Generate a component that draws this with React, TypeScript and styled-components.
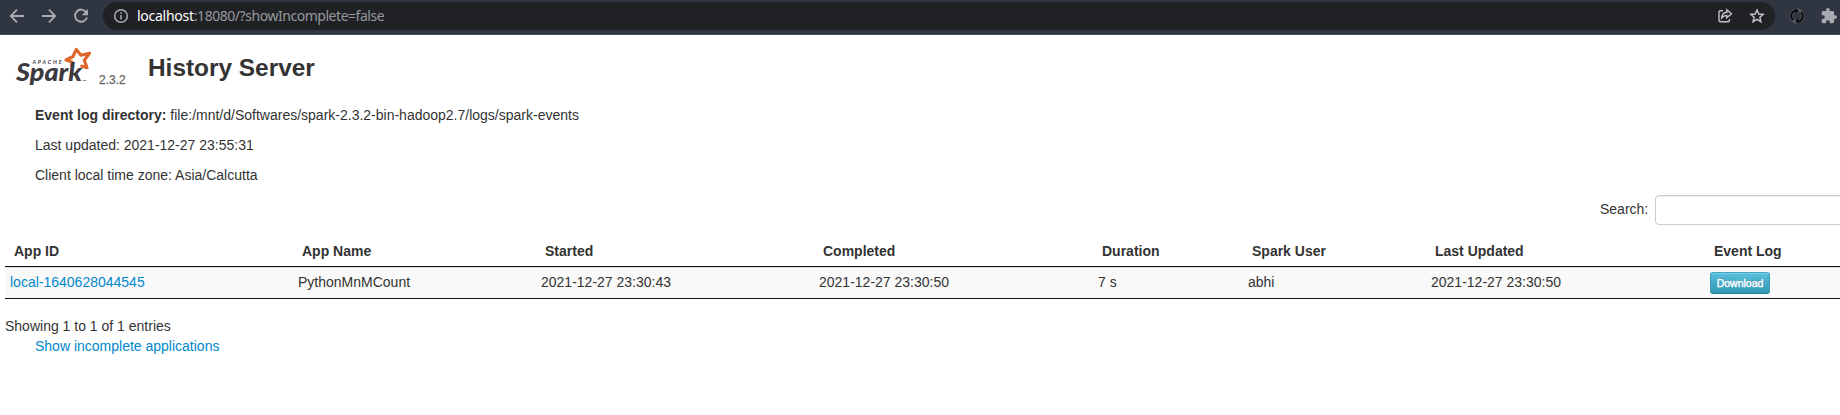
import React from 'react';
import styled, { createGlobalStyle } from 'styled-components';

const GlobalStyle = createGlobalStyle`
  * { box-sizing: border-box; }
  body {
    margin: 0;
    overflow: hidden;
    background: #fff;
    color: #333;
    font: 14px/20px "Liberation Sans", Arial, sans-serif;
  }
`;

const Toolbar = styled.header`
  display: flex;
  align-items: flex-start;
  height: 35px;
  padding-top: 2px;
  background: #303641;
  border-bottom: 1px solid #484c56;
`;

const NavButtons = styled.nav`
  display: flex;
  align-items: center;
  gap: 16px;
  width: 103px;
  height: 28px;
  padding-left: 9px;
`;

const Omnibox = styled.div`
  display: flex;
  align-items: center;
  width: 1672px;
  height: 28px;
  padding: 0 10px 0 10px;
  border-radius: 14px;
  background: #202124;
`;

const Url = styled.span`
  flex: 1;
  margin-left: 8px;
  color: #96999d;
  font: 14px/20px "Noto Sans", "Open Sans", sans-serif;
  letter-spacing: -0.46px;
`;

const Host = styled.span`
  color: #fff;
  letter-spacing: -0.26px;
`;

const Actions = styled.div`
  display: flex;
  align-items: center;
  gap: 16px;
`;

const Extensions = styled.div`
  display: flex;
  flex: none;
  align-items: center;
  gap: 16px;
  height: 28px;
  margin-left: 14px;
`;

const Glyph = styled.svg`
  display: block;
  flex: none;
  fill: none;
`;

const Heading = styled.div`
  display: flex;
  height: 70px;
  padding-left: 15px;
`;

const Logo = styled.svg`
  display: block;
  flex: none;
  width: 80px;
  height: 42px;
  margin-top: 11px;
`;

const Version = styled.span`
  width: 53px;
  padding: 35px 0 0 4px;
  color: #666;
  font-size: 12px;
  -webkit-text-stroke: 0.25px #666;
`;

const Title = styled.h3`
  margin: 13px 0 0;
  font-size: 24.4px;
  line-height: 40px;
`;

const Details = styled.ul`
  margin: 0;
  padding: 0 0 0 35px;
  list-style: none;
`;

const Detail = styled.li`
  height: 30px;
`;

const Search = styled.label`
  display: flex;
  align-items: flex-start;
  height: 30px;
  padding-left: 1600px;
  line-height: 28px;
  white-space: nowrap;
`;

const SearchInput = styled.input`
  flex: none;
  width: 206px;
  height: 30px;
  margin: 0 0 0 7px;
  border: 1px solid #ccc;
  border-radius: 4px;
  background: #fff;
  box-shadow: inset 0 1px 1px rgba(0, 0, 0, 0.075);
`;

const Table = styled.table`
  width: 1855px;
  margin: 11px 0 0 5px;
  table-layout: fixed;
  border-collapse: separate;
  border-spacing: 0;
  border-bottom: 1px solid #111;
`;

const Column = styled.col<{ $width: number }>`
  width: ${({ $width }) => $width}px;
`;

const HeaderCell = styled.th`
  height: 31px;
  padding: 5px 0 5px 9px;
  border-bottom: 1px solid #111;
  text-align: left;
`;

const Cell = styled.td`
  height: 31px;
  padding: 4px 0 0 5px;
  border-top: 1px solid #ddd;
  background: #f9f9f9;
  vertical-align: top;
`;

const Link = styled.a`
  color: #0088cc;
  text-decoration: none;
`;

const DownloadButton = styled.button`
  display: block;
  width: 60px;
  height: 22px;
  padding: 0;
  border: 1px solid #2f96b4;
  border-color: #41a5c4 #3a9bb8 #2a7f99;
  border-radius: 3px;
  background: linear-gradient(#5bc0de, #2f96b4);
  box-shadow: inset 0 1px 0 rgba(255, 255, 255, 0.2);
  color: #fff;
  font: 10.5px/20px "Liberation Sans", Arial, sans-serif;
  -webkit-text-stroke: 0.4px #fff;
  text-shadow: 0 -1px 0 rgba(0, 0, 0, 0.25);
`;

const Summary = styled.div`
  padding: 17px 0 0 5px;
`;

const IncompleteLink = styled(Link)`
  display: block;
  padding-left: 35px;
`;

const columns = [
  { name: 'App ID', width: 288 },
  { name: 'App Name', width: 243 },
  { name: 'Started', width: 278 },
  { name: 'Completed', width: 279 },
  { name: 'Duration', width: 150 },
  { name: 'Spark User', width: 183 },
  { name: 'Last Updated', width: 279 },
  { name: 'Event Log', width: 155 },
];

const NavIcons = () => (
  <NavButtons>
    <Glyph width="16" height="16" stroke="#a9adb2" strokeWidth="1.8">
      <path d="M15 8H2M8 1.7 1.8 8 8 14.3" />
    </Glyph>
    <Glyph width="16" height="16" stroke="#a9adb2" strokeWidth="1.8">
      <path d="M1 8h13M8 1.7 14.2 8 8 14.3" />
    </Glyph>
    <Glyph width="16" height="16" stroke="#a9adb2" strokeWidth="1.9">
      <path d="M13.2 4.2A6.1 6.1 0 1 0 14 9.5" />
      <path d="M15 1v6.3H8.8z" fill="#a9adb2" stroke="none" />
    </Glyph>
  </NavButtons>
);

const SparkLogo = () => (
  <Logo viewBox="0 0 80 42" role="img">
    <path
      d="M56.500 20.500 57 16 51 14 58 10.500 61.300 3.500 66 9.200 74.500 7.300 69.300 14.200 72 21.700 65.500 19.800"
      fill="none"
      stroke="#dd672c"
      strokeWidth="3.2"
      strokeLinejoin="round"
    />
    <text x="17.5" y="17.8" fontFamily="Lato" fontStyle="italic" fontWeight="bold" fontSize="5.3" fill="#3c3a3e" textLength="29">APACHE</text>
    <text x="1" y="35" fontFamily="Lato" fontStyle="italic" fontWeight="900" fontSize="24.500" fill="#3c3a3e" textLength="66" lengthAdjust="spacingAndGlyphs">Spark</text>
    <path d="M67.500 34.500h4" stroke="#999" strokeWidth="1" />
  </Logo>
);

export default function App() {
  return (
    <>
      <GlobalStyle />
      <Toolbar>
        <NavIcons />
        <Omnibox>
          <Glyph width="16" height="16" stroke="#a9adb2" strokeWidth="1.5">
            <circle cx="8" cy="8" r="6.3" />
            <path d="M8 7v4.500M8 4.200v1.600" />
          </Glyph>
          <Url><Host>localhost</Host>:18080/?showIncomplete=false</Url>
          <Actions>
            <Glyph width="16" height="16" stroke="#c0c2c5" strokeWidth="1.4">
              <path d="M6 2.700H3.500Q2 2.700 2 4.200v8Q2 13.700 3.500 13.700h7.500Q12.500 13.700 12.500 12.200V11" />
              <path d="M9.800 1.800 14.500 5.800l-4.700 4V7.500Q6.500 7.500 4.700 9.800 5.200 4.600 9.800 4.300z" />
            </Glyph>
            <Glyph width="16" height="16" stroke="#c0c2c5" strokeWidth="1.5">
              <path d="m8 2 1.800 4 4.400.4-3.300 2.900 1 4.300L8 11.300l-3.900 2.300 1-4.300L1.800 6.400 6.200 6z" />
            </Glyph>
          </Actions>
        </Omnibox>
        <Extensions>
          <Glyph width="16" height="16">
            <circle cx="8" cy="8" r="5.900" stroke="#5c6066" strokeWidth="3" />
            <path d="M9.500 13.600A5.800 5.800 0 0 0 12 3.800M6.500 2.400A5.800 5.800 0 0 0 4 12.200" stroke="#050606" strokeWidth="1.8" />
            <path d="M6 .5 10 2.500 6.500 5zM10 15.500 6 13.500 9.500 11z" fill="#050606" />
          </Glyph>
          <Glyph width="16" height="16" viewBox="1 1 22 22">
            <path
              fill="#a7aaae"
              d="M20.500 11H19V7c0-1.100-.9-2-2-2h-4V3.500a2.500 2.500 0 0 0-5 0V5H4c-1.100 0-2 .9-2 2v3.800h1.500a2.700 2.700 0 0 1 0 5.400H2V20c0 1.100.9 2 2 2h3.800v-1.500a2.700 2.700 0 0 1 5.400 0V22H17c1.100 0 2-.9 2-2v-4h1.500a2.500 2.500 0 0 0 0-5z"
            />
          </Glyph>
        </Extensions>
      </Toolbar>
      <Heading>
        <SparkLogo />
        <Version>2.3.2</Version>
        <Title>History Server</Title>
      </Heading>
      <Details>
        <Detail><strong>Event log directory:</strong> file:/mnt/d/Softwares/spark-2.3.2-bin-hadoop2.7/logs/spark-events</Detail>
        <Detail>Last updated: 2021-12-27 23:55:31</Detail>
        <Detail>Client local time zone: Asia/Calcutta</Detail>
      </Details>
      <Search>Search: <SearchInput type="text" /></Search>
      <Table>
        <colgroup>
          {columns.map((column) => <Column key={column.name} $width={column.width} />)}
        </colgroup>
        <thead>
          <tr>{columns.map((column) => <HeaderCell key={column.name}>{column.name}</HeaderCell>)}</tr>
        </thead>
        <tbody>
          <tr>
            <Cell><Link>local-1640628044545</Link></Cell>
            <Cell>PythonMnMCount</Cell>
            <Cell>2021-12-27 23:30:43</Cell>
            <Cell>2021-12-27 23:30:50</Cell>
            <Cell>7 s</Cell>
            <Cell>abhi</Cell>
            <Cell>2021-12-27 23:30:50</Cell>
            <Cell><DownloadButton>Download</DownloadButton></Cell>
          </tr>
        </tbody>
      </Table>
      <Summary>Showing 1 to 1 of 1 entries</Summary>
      <IncompleteLink>Show incomplete applications</IncompleteLink>
    </>
  );
}
